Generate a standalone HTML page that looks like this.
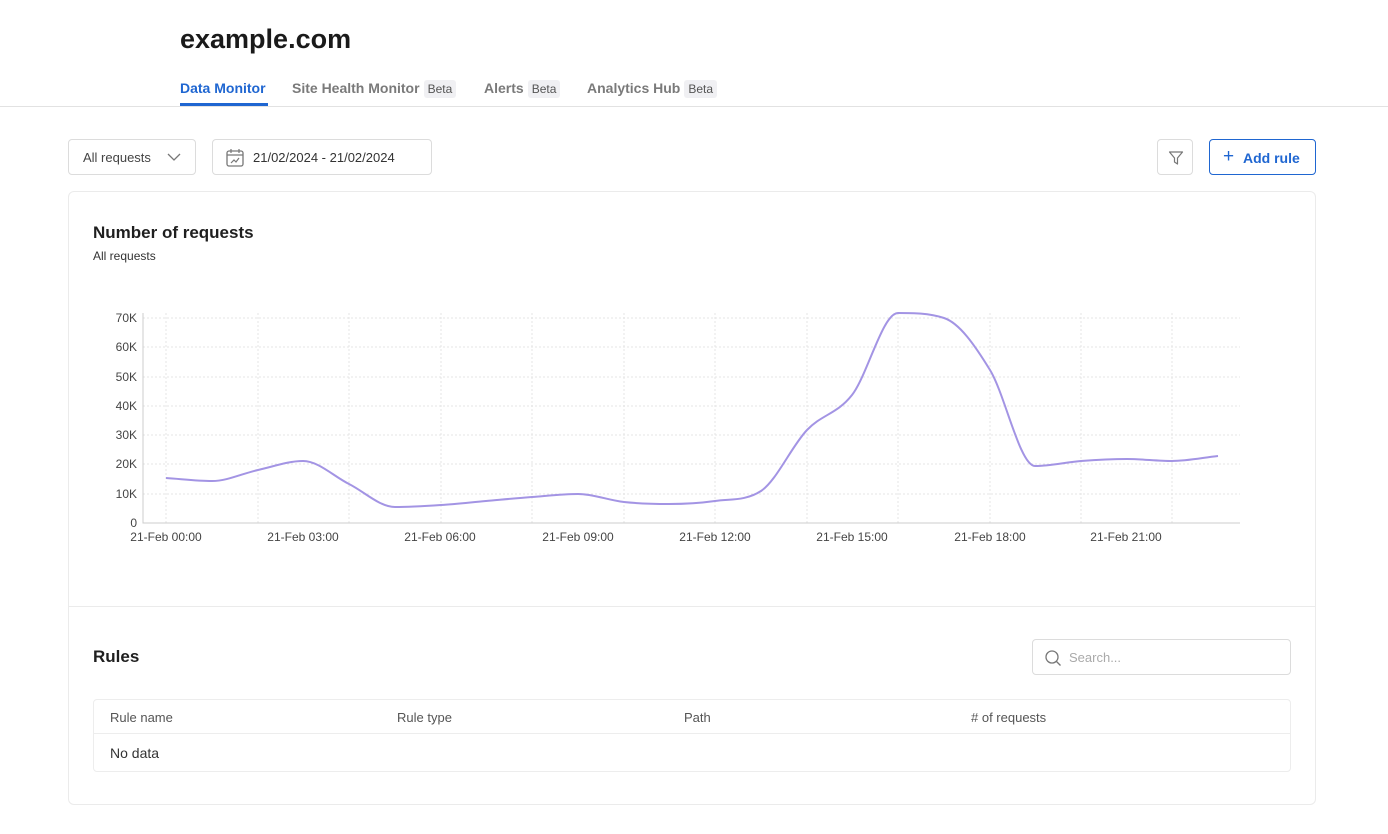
<!DOCTYPE html>
<html><head><meta charset="utf-8"><style>
*{box-sizing:border-box;margin:0;padding:0}
body{width:1388px;height:834px;background:#fff;font-family:"Liberation Sans",sans-serif;color:#1f1f1f;position:relative;overflow:hidden}
.a{position:absolute}
.tab{position:absolute;top:80px;font-size:14px;color:#7a7a7a;font-weight:bold;white-space:nowrap}
.beta{display:inline-block;background:#f0f0f3;color:#555;font-weight:normal;font-size:12px;padding:2px 4px;border-radius:3px;margin-left:4px}
.box{position:absolute;border:1px solid #dcdcdc;border-radius:4px;background:#fff}
</style></head><body>
<div class="a" style="left:180px;top:24px;font-size:27px;font-weight:bold;color:#1a1a1a">example.com</div>
<div class="tab" style="left:180px;color:#1f66d1">Data Monitor</div>
<div class="a" style="left:180px;top:103px;width:88px;height:3px;background:#1f66d1"></div>
<div class="tab" style="left:292px">Site Health Monitor<span class="beta">Beta</span></div>
<div class="tab" style="left:484px">Alerts<span class="beta">Beta</span></div>
<div class="tab" style="left:587px">Analytics Hub<span class="beta">Beta</span></div>
<div class="a" style="left:0;top:106px;width:1388px;height:1px;background:#e2e2e2"></div>

<div class="box" style="left:68px;top:139px;width:128px;height:36px"><span class="a" style="left:14px;top:10px;font-size:13px;color:#444">All requests</span>
<svg class="a" style="left:98px;top:12px" width="14" height="10"><path d="M1 2l6 6 6-6" fill="none" stroke="#777" stroke-width="1.3"/></svg></div>
<div class="box" style="left:212px;top:139px;width:220px;height:36px">
<svg class="a" style="left:12px;top:8px" width="20" height="20"><rect x="2" y="3" width="16" height="15" rx="2" fill="none" stroke="#777" stroke-width="1.3"/><path d="M2 7h16M6 1v4M14 1v4M6 15l3-3 2 2 3-4" fill="none" stroke="#777" stroke-width="1.2"/></svg>
<span class="a" style="left:40px;top:10px;font-size:13px;color:#333">21/02/2024 - 21/02/2024</span></div>
<div class="box" style="left:1157px;top:139px;width:36px;height:36px">
<svg class="a" style="left:10px;top:10px" width="16" height="16"><path d="M1.5 2h13l-5 6v6l-3-2V8z" fill="none" stroke="#777" stroke-width="1.2" stroke-linejoin="round"/></svg></div>
<div class="box" style="left:1209px;top:139px;width:107px;height:36px;border-color:#1f66d1">
<span class="a" style="left:13px;top:6px;font-size:19px;color:#1f66d1">+</span>
<span class="a" style="left:33px;top:10px;font-size:14px;font-weight:bold;color:#1f66d1">Add rule</span></div>

<div class="box" style="left:68px;top:191px;width:1248px;height:614px;border-color:#ebebeb;border-radius:6px"></div>
<div class="a" style="left:93px;top:223px;font-size:17px;font-weight:bold">Number of requests</div>
<div class="a" style="left:93px;top:249px;font-size:12px;color:#333">All requests</div>

<svg class="a" style="left:0;top:0" width="1388" height="600">
<g stroke="#e4e4e4" stroke-dasharray="2,2" stroke-width="1">
<line x1="143" x2="1240" y1="318" y2="318"/><line x1="143" x2="1240" y1="347" y2="347"/><line x1="143" x2="1240" y1="377" y2="377"/><line x1="143" x2="1240" y1="406" y2="406"/><line x1="143" x2="1240" y1="435" y2="435"/><line x1="143" x2="1240" y1="464" y2="464"/><line x1="143" x2="1240" y1="494" y2="494"/>
<line x1="166" x2="166" y1="313" y2="523"/><line x1="258" x2="258" y1="313" y2="523"/><line x1="349" x2="349" y1="313" y2="523"/><line x1="441" x2="441" y1="313" y2="523"/><line x1="532" x2="532" y1="313" y2="523"/><line x1="624" x2="624" y1="313" y2="523"/><line x1="715" x2="715" y1="313" y2="523"/><line x1="807" x2="807" y1="313" y2="523"/><line x1="898" x2="898" y1="313" y2="523"/><line x1="990" x2="990" y1="313" y2="523"/><line x1="1081" x2="1081" y1="313" y2="523"/><line x1="1172" x2="1172" y1="313" y2="523"/>
</g>
<path d="M143 313V523H1240" fill="none" stroke="#ccc"/>
<g font-size="12" fill="#444" text-anchor="end" font-family="Liberation Sans">
<text x="137" y="322">70K</text><text x="137" y="351">60K</text><text x="137" y="381">50K</text><text x="137" y="410">40K</text><text x="137" y="439">30K</text><text x="137" y="468">20K</text><text x="137" y="498">10K</text><text x="137" y="527">0</text>
</g>
<g font-size="12" fill="#444" text-anchor="middle" font-family="Liberation Sans">
<text x="166" y="541">21-Feb 00:00</text><text x="303" y="541">21-Feb 03:00</text><text x="440" y="541">21-Feb 06:00</text><text x="578" y="541">21-Feb 09:00</text><text x="715" y="541">21-Feb 12:00</text><text x="852" y="541">21-Feb 15:00</text><text x="990" y="541">21-Feb 18:00</text><text x="1126" y="541">21-Feb 21:00</text>
</g>
<path id="curve" fill="none" stroke="#a394e4" stroke-width="2" d="M166 478L212 481L258 470L303 461L349 484L395 507L441 505L486 501L532 497L578 494L624 502L669 504L715 501L761 491L807 430L852 395L898 313L944 318L990 370L1035 466L1081 461L1127 459L1172 461L1218 456"/>
</svg>
<div class="a" style="left:69px;top:606px;width:1246px;height:1px;background:#ebebeb"></div>
<div class="a" style="left:93px;top:647px;font-size:17px;font-weight:bold">Rules</div>
<div class="box" style="left:1032px;top:639px;width:259px;height:36px">
<svg class="a" style="left:11px;top:9px" width="18" height="18"><circle cx="8" cy="8" r="6" fill="none" stroke="#777" stroke-width="1.3"/><path d="M12.5 12.5l4 4" stroke="#777" stroke-width="1.3"/></svg>
<span class="a" style="left:36px;top:10px;font-size:13px;color:#aaa">Search...</span></div>
<div class="box" style="left:93px;top:699px;width:1198px;height:73px;border-color:#ededed">
<div class="a" style="left:0;top:33px;width:1196px;height:1px;background:#ededed"></div>
<span class="a" style="left:16px;top:10px;font-size:13px;color:#555">Rule name</span>
<span class="a" style="left:303px;top:10px;font-size:13px;color:#555">Rule type</span>
<span class="a" style="left:590px;top:10px;font-size:13px;color:#555">Path</span>
<span class="a" style="left:877px;top:10px;font-size:13px;color:#555"># of requests</span>
<span class="a" style="left:16px;top:45px;font-size:14px;color:#333">No data</span>
</div>
<script>
(function(){var p=[[166,478],[212,481],[258,470],[303,461],[349,484],[395,507],[441,505],[486,501],[532,497],[578,494],[624,502],[669,504],[715,501],[761,491],[807,430],[852,395],[898,313],[944,318],[990,370],[1035,466],[1081,461],[1127,459],[1172,461],[1218,456]];
var n=p.length,s=[],m=[];
for(var i=0;i<n-1;i++)s.push((p[i+1][1]-p[i][1])/(p[i+1][0]-p[i][0]));
for(i=0;i<n;i++){if(i==0)m.push(s[0]);else if(i==n-1)m.push(s[n-2]);else{var a=s[i-1],b=s[i];if(a*b<=0)m.push(0);else{var h0=p[i][0]-p[i-1][0],h1=p[i+1][0]-p[i][0];m.push((a*h1+b*h0)/(h0+h1));var lim=3*Math.min(Math.abs(a),Math.abs(b));if(Math.abs(m[i])>lim)m[i]=Math.sign(m[i])*lim;}}}
var d="M"+p[0][0]+" "+p[0][1];
for(i=0;i<n-1;i++){var h=(p[i+1][0]-p[i][0])/3;d+="C"+(p[i][0]+h)+" "+(p[i][1]+m[i]*h)+" "+(p[i+1][0]-h)+" "+(p[i+1][1]-m[i+1]*h)+" "+p[i+1][0]+" "+p[i+1][1];}
document.getElementById("curve").setAttribute("d",d);})();
</script>
</body></html>
